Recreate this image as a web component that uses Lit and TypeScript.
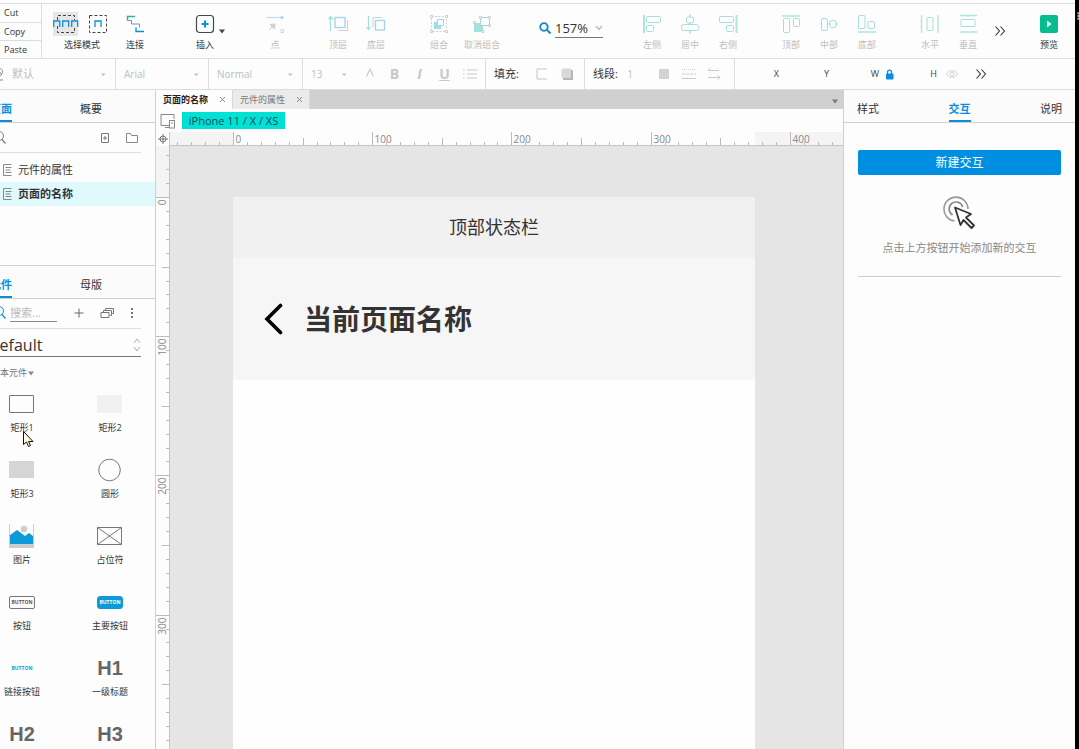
import { LitElement, html, svg, css } from "lit";
import { customElement, state } from "lit/decorators.js";

const TEAL = "#a5dfdc";
const SKY = "#a3d3ea";
const PALE = "#cfcfcf";
const BLUE = "#0a8edb";
const SCALE = 1.392;

const box = (w: number, h: number, body: unknown) =>
  html`<svg width=${w} height=${h} viewBox="0 0 ${w} ${h}" fill="none" aria-hidden="true">${body}</svg>`;

const icons: Record<string, unknown> = {
  selectA: box(26, 24, svg`<rect width="25" height="24" fill="#e6e6e6"/><path d="M4.500 8V3.500h17V8M4.500 14v6.500h17V14" stroke="#444" stroke-dasharray="3 2"/><path d="M.7 15V9h6v6M9.700 15V9h6v6M18.700 15V9h6v6" stroke="${BLUE}" stroke-width="1.300"/>`),
  selectB: box(26, 24, svg`<path d="M4.500 3.500h17v17h-17z" stroke="#444" stroke-dasharray="3 2"/><path d="M10 15V9h6v6" stroke="${BLUE}" stroke-width="1.300"/>`),
  connect: box(20, 20, svg`<path d="M10 2.500H2.500v4" stroke="#2bb3a0" stroke-width="1.400"/><path d="M2.500 6.500h4v3.500h8v3.500" stroke="#6f9aab"/><path d="M11 13.500v4h8" stroke="${BLUE}" stroke-width="1.300"/>`),
  insert: box(20, 20, svg`<rect x="1.500" y="1.500" width="17" height="17" rx="3" stroke="#3d4a52" stroke-width="1.200"/><path d="M10 6.500v7M6.500 10h7" stroke="${BLUE}" stroke-width="2"/>`),
  point: box(20, 20, svg`<path d="M1 3.500h15" stroke="#b9dff0" stroke-width="1.200"/><circle cx="17" cy="3.500" r="1.500" fill="${SKY}"/><path d="M4 16l5-5M5 10.500l5-.5-.5 5z" stroke="${PALE}" fill="${PALE}"/><rect x="16" y="15.500" width="2.500" height="3" stroke="#c6dbe4"/>`),
  front: box(20, 20, svg`<path d="M2.500 17V3M.5 5.500L2.500 2.500 5 5.500" stroke="${TEAL}" stroke-width="1.300"/><rect x="7" y="3.500" width="10" height="10" stroke="${SKY}" stroke-width="1.300"/><path d="M19.500 6v10.500H10" stroke="${PALE}"/>`),
  back: box(20, 20, svg`<path d="M2.500 2v13M.5 13l2 2.500 2-2.500" stroke="${TEAL}" stroke-width="1.200"/><path d="M7 13.500V3.500h9" stroke="${PALE}"/><rect x="9.500" y="6.500" width="9" height="9.500" stroke="${SKY}" stroke-width="1.300"/>`),
  group: box(20, 20, svg`<path d="M2.500 2.500h15v15h-15z" stroke="${PALE}" stroke-dasharray="2 1.500"/><g fill="#fff" stroke="${PALE}"><path d="M1.500 1.500h2v2h-2zM16.500 1.500h2v2h-2zM1.500 16.500h2v2h-2zM16.500 16.500h2v2h-2z"/></g><path d="M5 8h7v7H5z" fill="#9edfe0"/><path d="M8.500 5.500h6v6h-6z" fill="#fff" stroke="${SKY}"/>`),
  ungroup: box(20, 20, svg`<path d="M2 9h9v9H2z" fill="#a5e0df"/><path d="M8.500 3.500h9v8h-9z" fill="#fff" stroke="${SKY}"/><g fill="#fff" stroke="${PALE}"><path d="M7.500 2.500h2v2h-2zM16.500 2.500h2v2h-2zM16.500 10.500h2v2h-2zM1.500 7.500h2v2h-2zM10 16.500h2v2h-2z"/></g>`),
  left: box(20, 20, svg`<path d="M2 1v18" stroke="#aee8d3" stroke-width="2"/><rect x="4.500" y="2.500" width="14" height="6" rx="1" stroke="${TEAL}"/><rect x="4.500" y="11.500" width="7" height="6" rx="1" stroke="${TEAL}"/>`),
  center: box(20, 20, svg`<path d="M10 0v3M10 8v2M10 17v3" stroke="${TEAL}" stroke-width="1.300"/><rect x="6.500" y="3" width="7" height="6" rx="2" stroke="${TEAL}"/><rect x="1.500" y="10.500" width="17" height="6" rx="2" stroke="${TEAL}"/>`),
  right: box(20, 20, svg`<path d="M18.500 1v18" stroke="#aee8d3" stroke-width="2"/><rect x="1.500" y="2.500" width="14" height="6" rx="1" stroke="${TEAL}"/><rect x="8.500" y="11.500" width="7" height="6" rx="1" stroke="${TEAL}"/>`),
  top: box(20, 20, svg`<path d="M1 2h18" stroke="#aee8d3" stroke-width="1.500"/><rect x="2.500" y="4.500" width="6" height="14" rx="1" stroke="${TEAL}"/><rect x="12.500" y="4.500" width="6" height="8" rx="1" stroke="${TEAL}"/>`),
  middle: box(20, 20, svg`<path d="M1 10h2M9 10h2M17 10h2" stroke="${TEAL}"/><rect x="2.500" y="4.500" width="6" height="12" rx="1.500" stroke="${TEAL}"/><rect x="11" y="6.500" width="6" height="7" rx="1.500" stroke="${TEAL}"/>`),
  bottom: box(20, 20, svg`<path d="M1 18h18" stroke="#aee8d3" stroke-width="1.500"/><rect x="1.500" y="1.500" width="6.500" height="13" rx="1" stroke="${TEAL}"/><rect x="11" y="7.500" width="6.500" height="7" rx="1" stroke="${TEAL}"/>`),
  horizontal: box(20, 20, svg`<path d="M1.500 1v18M18 1v18" stroke="#aee8d3" stroke-width="1.300"/><rect x="7" y="3.500" width="6" height="13" rx="1" stroke="${TEAL}"/>`),
  vertical: box(20, 20, svg`<path d="M2 1.500h17M2 18h17" stroke="#aee8d3" stroke-width="1.500"/><rect x="3" y="5.500" width="14" height="7" rx="1" stroke="${TEAL}"/>`),
  preview: box(20, 20, svg`<rect x="1" y="1" width="18" height="18" rx="2" fill="#05bd90"/><path d="M8 6.500l4.500 3.500L8 13.500z" fill="#fff"/>`),
  more: box(12, 12, svg`<path d="M1.500 1.500l4 4.500-4 4.500M6.500 1.500l4 4.500-4 4.500" stroke="#333" stroke-width="1.100"/>`),
  caret: box(8, 5, svg`<path d="M1 .5h6L4 4.500z" fill="currentColor"/>`),
  tick: box(8, 5, svg`<path d="M2 1.500h4.500L4.200 4z" fill="currentColor"/>`),
  chevron: box(8, 6, svg`<path d="M1 1l3 3.500L7 1" stroke="#bbb" stroke-width="1.200"/>`),
  updown: box(8, 14, svg`<path d="M1 5l3-4 3 4M1 9l3 4 3-4" stroke="#aaa"/>`),
  zoom: box(12, 12, svg`<circle cx="5" cy="5" r="3.800" stroke="#1586c8" stroke-width="1.800"/><path d="M8 8l3.500 3.500" stroke="#1586c8" stroke-width="2"/>`),
  search: box(12, 14, svg`<circle cx="5" cy="5" r="4.500" stroke="currentColor"/><path d="M8 8.500l3.500 4" stroke="currentColor" stroke-width="1.200"/>`),
  brush: box(12, 14, svg`<path d="M3 2c6-2 9 1 7 5L7 10M4 5c3-1 5 0 5 2M3 13h8" stroke="#888"/>`),
  textColor: box(12, 14, svg`<path d="M2.500 9.500L6 2l3.500 7.500" stroke="#ccc" stroke-width="1.200"/>`),
  list: box(16, 12, svg`<path d="M1 2h1.500M1 6h1.500M1 10h1.500M5 2h10M5 6h10M5 10h10" stroke="#c8c8c8" stroke-width="1.200"/>`),
  fill: box(12, 12, svg`<path d="M11 1H1v10h10" stroke="#c5c5c5"/>`),
  shadow: box(12, 12, svg`<path d="M2 2h10v10H2z" fill="#b5b5b5"/><rect x=".5" y=".5" width="9.500" height="9.500" rx="1" fill="#d8d8d8"/>`),
  square: box(12, 12, svg`<path d="M1 1h10v10H1z" fill="#d2d2d2"/>`),
  dashes: box(14, 12, svg`<path d="M0 1.500h14" stroke="#ccc" stroke-dasharray="1 1"/><path d="M0 6h14" stroke="#ccc" stroke-dasharray="3 1"/><path d="M0 10.500h14" stroke="#ccc"/>`),
  arrows: box(14, 12, svg`<path d="M12 2.500H1l2.500-2M1 9.500h12l-2.500-2M13 9.500l-2.500 2" stroke="#c8c8c8"/>`),
  lock: box(9, 11, svg`<path d="M2.500 5V3.200a2 2 0 0 1 4 0V5" stroke="${BLUE}" stroke-width="1.300"/><rect x="1" y="4.500" width="7.500" height="6" rx="1" fill="${BLUE}"/>`),
  eye: box(12, 10, svg`<path d="M.5 5C3 .5 9 .5 11.500 5 9 9.500 3 9.500.5 5z" stroke="#d2d2d2"/><circle cx="6" cy="5" r="1.800" stroke="#d2d2d2"/>`),
  close: box(7, 7, svg`<path d="M1 1l5 5M6 1L1 6" stroke="#888"/>`),
  devices: box(16, 16, svg`<path d="M9 12.500H1V1.500h13V6M5 14.500h5" stroke="#888"/><rect x="9.500" y="7.500" width="5" height="7.500" stroke="#888"/><path d="M11 10h2" stroke="#888"/>`),
  target: box(10, 10, svg`<circle cx="5" cy="5" r="3" stroke="#777"/><path d="M5 0v10M0 5h10" stroke="#777"/>`),
  addPage: box(10, 12, svg`<path d="M1.500 1.500h7v9h-7z" stroke="#777"/><path d="M5 4v4M3 6h4" stroke="#777"/>`),
  folder: box(12, 10, svg`<path d="M.5 9.500v-9h4l1 2h6v7z" stroke="#888"/>`),
  page: box(10, 12, svg`<path d="M9.500.5h-8v11h8M3.500 3.500h6M3.500 6h5M3.500 8.500h6" stroke="#888"/>`),
  plus: box(10, 10, svg`<path d="M5 .5v9M.5 5h9" stroke="#666"/>`),
  stack: box(14, 12, svg`<path d="M1 5.500h8v5H1z" stroke="#777"/><path d="M3.500 5V3.500h8v5H10M5.500 3V1.500h8v5H12" stroke="#777"/>`),
  dots: box(4, 12, svg`<path d="M1 1h2v2H1zM1 5h2v2H1zM1 9h2v2H1z" fill="#777"/>`),
  tap: box(34, 34, svg`<path d="M11.500 25A12 12 0 1 1 25 13" stroke="#999" stroke-width="1.600"/><path d="M9.500 19A7 7 0 1 1 19.800 11" stroke="#888" stroke-width="1.600"/><path d="M12 11.500l16 6.500-5 3.500 8 8-2.500 2.500-8-8-3 5z" fill="#fff" stroke="#333" stroke-width="1.800" stroke-linejoin="round"/>`),
  back2: box(20, 34, svg`<path d="M17.500 3.500L4 17l13.500 13.500" stroke="#000" stroke-width="3.600" stroke-linecap="round"/>`),
  cursor: box(13, 18, svg`<path d="M1.500 1.500v13l3-2.500 2 4.500 2-1-2-4h4.500z" fill="#fffbe0" stroke="#111"/>`),
  rect1: box(26, 20, svg`<path d="M.5 1.500h24v17H.5z" stroke="#777"/>`),
  rect2: box(26, 20, svg`<path d="M0 1h25v18H0z" fill="#f1f1f1"/>`),
  rect3: box(26, 20, svg`<path d="M0 1h25v17H0z" fill="#d5d5d5"/>`),
  circle: box(26, 24, svg`<circle cx="12.500" cy="12" r="10.800" stroke="#777"/>`),
  image: box(26, 26, svg`<path d="M.5 1v24M24.500 1v24" stroke="#ccc"/><path d="M0 21h25v4H0z" fill="#cdcdcd"/><path d="M1 21v-9l7-5 8 6 4-3 4 3v8z" fill="#0c9ad8"/><circle cx="15" cy="6" r="3.200" fill="#ccc"/>`),
  placeholder: box(26, 20, svg`<path d="M.5 1.500h24v17H.5zM.5 1.500l24 17M24.500 1.500l-24 17" stroke="#777"/>`),
};

const alignTools = [
  [["left", "左侧"], ["center", "居中"], ["right", "右侧"]],
  [["top", "顶部"], ["middle", "中部"], ["bottom", "底部"]],
  [["horizontal", "水平"], ["vertical", "垂直"]],
];

const widgets: [unknown, string][] = [
  [icons.rect1, "矩形1"],
  [icons.rect2, "矩形2"],
  [icons.rect3, "矩形3"],
  [icons.circle, "圆形"],
  [icons.image, "图片"],
  [icons.placeholder, "占位符"],
  [html`<span class="chip">BUTTON</span>`, "按钮"],
  [html`<span class="chip solid">BUTTON</span>`, "主要按钮"],
  [html`<span class="chip link">BUTTON</span>`, "链接按钮"],
  [html`<span class="head">H1</span>`, "一级标题"],
  [html`<span class="head">H2</span>`, "二级标题"],
  [html`<span class="head">H3</span>`, "三级标题"],
];

@customElement("app-root")
export class AppRoot extends LitElement {
  @state() private page = "页面的名称";

  static styles = css`
    :host {
      display: flex;
      height: 100vh;
      overflow: hidden;
      background: #fdfdfd;
      color: #333;
      font-family: "Open Sans", "Noto Sans CJK SC", sans-serif;
      font-size: 11px;
      line-height: 16px;
    }
    * { box-sizing: border-box; }
    svg { display: block; flex: none; }
    button, select, input {
      font: inherit;
      color: inherit;
      background: none;
      border: 0;
      padding: 0;
      margin: 0;
      min-width: 0;
      border-radius: 0;
      outline: 0;
    }
    button { display: flex; align-items: center; justify-content: center; white-space: nowrap; }
    select { appearance: none; }
    .window { flex: 1; min-width: 0; display: flex; flex-direction: column; }
    .edge { flex: none; width: 4px; background: #000; padding-top: 12px; }
    .toolbar { display: flex; height: 59px; flex: none; border-bottom: 1px solid #dcdcdc; padding-top: 3px; }
    .tools { flex: 1; min-width: 0; display: flex; border-top: 1px solid #dcdcdc; }
    .clip { flex: none; width: 42px; display: grid; grid-template-rows: repeat(3, 1fr); border-top: 1px solid #dcdcdc; border-right: 1px solid #dcdcdc; font-size: 9px; line-height: 12px; }
    .clip button { justify-content: start; padding-left: 4px; }
    .clip button + button { border-top: 1px solid #dcdcdc; }
    .group { flex: none; display: flex; margin-left: 25px; }
    .group.near { margin-left: 2px; }
    .group.mid { margin-left: 32px; }
    .group.first { margin-left: 8px; }
    .group.wide { margin-left: 30px; }
    .tool { width: 38px; flex-direction: column; justify-content: start; gap: 4px; padding-top: 10px; font-size: 9px; line-height: 14px; }
    .tool.big { width: 48px; }
    .tool.off { color: #bdbdbd; }
    .modes { width: 64px; gap: 2px; padding-top: 8px; }
    .pair { display: flex; gap: 6px; }
    .drop { width: 8px; margin-left: -6px; color: #444; }
    .zoom { flex: none; display: flex; align-items: center; gap: 4px; margin-left: 33px; width: 64px; height: 33px; padding-top: 15px; }
    .pick { display: grid; align-items: center; flex: 1; min-width: 0; }
    .pick > * { grid-area: 1 / 1; }
    .pick > svg { justify-self: end; pointer-events: none; }
    .pick select { width: 100%; }
    .zoom .pick { border-bottom: 1px solid #777; font-size: 13px; height: 19px; }
    .more { margin-left: 7px; width: 12px; }
    .spacer { flex: 1; }
    .group.preview { margin: 0 7px 0 0; }

    .stylebar { display: flex; height: 31px; flex: none; border-bottom: 1px solid #dcdcdc; color: #bdbdbd; font-size: 10px; }
    .seg { flex: none; display: flex; align-items: center; border-right: 1px solid #dcdcdc; padding: 0 8px; white-space: nowrap; }
    .seg.theme { width: 116px; padding-left: 0; font-size: 11px; gap: 8px; }
    .seg.theme > svg { margin-left: -8px; }
    .seg.face { width: 93px; }
    .seg.weight { width: 94px; }
    .seg.text { width: 183px; }
    .seg.text .pick { flex: none; width: 37px; margin-right: 9px; }
    .seg.text button { font-size: 14px; font-weight: 700; color: #c8c8c8; }
    .seg.fill { width: 99px; color: #333; font-size: 11px; }
    .seg.line { width: 150px; font-size: 11px; }
    .seg.line label { color: #333; }
    .seg button { flex: none; width: 25px; height: 24px; }
    .seg .start { margin-left: 11px; }
    .seg .num { width: 20px; text-align: right; margin-right: 18px; font-size: 10px; }
    .geo { display: flex; align-items: center; flex: 1; min-width: 0; color: #444; font-size: 9px; }
    .geo label { flex: none; width: 50px; display: flex; justify-content: end; }
    .geo label:first-child { width: 44px; }
    .geo input { flex: 1; }
    .geo > svg { margin-left: 6px; }
    .geo label.last { width: 43px; }
    .geo button { flex: none; margin-left: 6px; width: 18px; }
    .geo button + button { margin-left: 11px; }

    .main { flex: 1; min-height: 0; display: grid; grid-template-columns: 156px minmax(0, 1fr) 232px; }
    .side { border-right: 1px solid #cfcfcf; overflow: hidden; min-height: 0; }
    .inner { height: 100%; margin-left: -44px; display: flex; flex-direction: column; }
    .tabs { display: flex; flex: none; height: 33px; border-bottom: 1px solid #cfcfcf; background: #fbfbfb; padding-right: 19px; }
    .tabs button { flex: 1; }
    .tabs span { height: 100%; padding-top: 7px; display: flex; align-items: center; border-bottom: 2px solid transparent; }
    .tabs .on span { color: #0a8edb; font-weight: 700; border-color: #0a8edb; }
    .find { display: flex; align-items: center; flex: none; height: 30px; margin: 0 14px 0 38px; border-bottom: 1px solid #dedede; color: #777; }
    .find input { flex: 1; }
    .find .gap { margin: 0 3px 0 16px; }
    .find.blue > svg { color: #0a8edb; }
    .find.blue input { flex: none; width: 47px; height: 18px; margin-left: 4px; border-bottom: 1px solid #888; }
    .find.blue { padding-bottom: 2px; }
    .find.blue button { flex: none; }
    .find.blue .plus { width: 43px; }
    .find.blue .more-options { margin-left: 16px; }
    input::placeholder { color: #bbb; opacity: 1; }
    .pages { flex: none; height: 113px; padding-top: 5px; border-bottom: 1px solid #cfcfcf; }
    .pages button { width: 100%; height: 24px; justify-content: start; gap: 6px; padding-left: 46px; }
    .pages .on { background: #dff9fc; font-weight: 700; }
    .library { flex: none; display: flex; height: 28px; margin: 0 14px 0 32px; padding-top: 4px; border-bottom: 1px solid #777; font-size: 16px; line-height: 24px; }
    .section { flex: none; padding: 8px 0 0 35px; font-size: 9px; color: #777; display: flex; align-items: center; }
    .section svg { color: #888; }
    .widgets { display: grid; grid-template-columns: 88px 88px; grid-auto-rows: 66px; padding: 7px 0 0 22px; flex: 1; min-height: 0; overflow: hidden; }
    .widget { display: grid; grid-template-rows: 32px 16px; justify-items: center; align-items: center; align-content: start; font-size: 9px; line-height: 14px; color: #333; }
    .widget i { font-style: normal; }
    .chip { display: block; width: 26px; border: 1px solid #777; border-radius: 2px; font: 700 5px/11px "Open Sans", sans-serif; text-align: center; color: #555; }
    .chip.solid { background: #0c9ad8; border-color: #0c9ad8; color: #fff; border-radius: 3px; }
    .chip.link { border-color: transparent; color: #0c9ad8; }
    .head { font: 700 20px/24px "Liberation Sans", sans-serif; color: #666; }
    .cursor { position: absolute; left: 22px; top: 430px; pointer-events: none; }

    .editor { min-width: 0; display: flex; flex-direction: column; }
    .files { flex: none; display: flex; height: 19px; background: #d0d0d0; }
    .files button { width: 77px; padding: 0 6px 0 7px; justify-content: space-between; font-size: 9px; line-height: 14px; background: #ebebeb; color: #777; border-right: 1px solid #d8d8d8; }
    .files .on { background: #fdfdfd; color: #222; font-weight: 700; }
    .files .menu { margin-left: auto; width: 16px; background: none; border: 0; color: #777; padding: 4px 0 0 4px; justify-content: start; }
    .device { flex: none; display: flex; align-items: center; gap: 6px; height: 23px; padding-left: 4px; }
    .device button { background: #00e1d5; width: 103px; height: 17px; font-size: 11px; color: #245; }
    .stage { flex: 1; min-height: 0; display: grid; grid-template: 14px minmax(0, 1fr) / 14px minmax(0, 1fr); }
    .corner { display: grid; place-items: center; border-right: 1px solid #ccc; }
    .ruler { background: #f4f4f4; overflow: hidden; }
    .ruler.h { border-bottom: 1px solid #c4c4c4; }
    .ruler.v { border-right: 1px solid #c4c4c4; }
    .ruler svg { width: 100%; height: 100%; }
    .ruler text { font-size: 10px; fill: #888; }
    .canvas { background: #e5e5e5; overflow: hidden; padding: 51px 0 0 63px; display: flex; }
    .phone { width: 522px; flex: none; background: #fefefe; color: #333; }
    .status { height: 61px; padding-bottom: 2px; background: #f1f1f1; font-size: 18px; display: grid; place-items: center; }
    .title { height: 122px; background: #f6f6f6; display: flex; align-items: center; gap: 21px; padding-left: 30px; }
    .title h1 { margin: 0; font-size: 28px; line-height: 40px; font-weight: 700; }

    .props { border-left: 1px solid #cfcfcf; display: flex; flex-direction: column; }
    .props .tabs { padding: 0 13px; justify-content: space-between; }
    .props .tabs button { flex: none; }
    .interact { margin: 27px 14px 0; padding-bottom: 20px; border-bottom: 1px solid #ccc; display: flex; flex-direction: column; align-items: center; }
    .interact button { width: 100%; height: 25px; border-radius: 2px; background: #008fe0; color: #fff; font-size: 12px; }
    .interact svg { margin-top: 21px; }
    .interact p { margin: 10px 0 0; color: #888; white-space: nowrap; }
  `;

  private tool(icon: string, label: string, extra = "off") {
    return html`<button class="tool ${extra}">${icons[icon]}<span>${label}</span></button>`;
  }

  private select(label: string, value: string, mark = "tick") {
    return html`<span class="pick"><select aria-label=${label}><option>${value}</option></select>${icons[mark]}</span>`;
  }

  private ruler(vertical: boolean) {
    const origin = vertical ? 51 : 63;
    const edge = 13;
    const marks = Array.from({ length: 62 }, (_, i) => (i - 5) * 10);
    return html`<svg aria-hidden="true">
      ${vertical
        ? svg`<rect x="0" y=${origin} width="13" height="1200" fill="#fdfdfd"/>`
        : svg`<rect x=${origin} y="0" width="522" height="14" fill="#fdfdfd"/>`}
      ${marks.map((m) => {
        const p = Math.round(origin + m * SCALE) + 0.5;
        const size = m % 100 === 0 ? edge : m % 50 === 0 ? 7 : 3;
        const d = vertical ? `M${edge} ${p}h${-size}` : `M${p} ${edge}v${-size}`;
        return svg`<path d=${d} stroke="#bbb"/>
          ${m % 100 === 0
            ? vertical
              ? svg`<text transform="translate(10 ${p + 2}) rotate(-90)" text-anchor="end">${m}</text>`
              : svg`<text x=${p + 2} y="11">${m}</text>`
            : ""}`;
      })}
    </svg>`;
  }

  private pageRow(name: string) {
    return html`<button class=${this.page === name ? "on" : ""} @click=${() => (this.page = name)}>${icons.page}${name}</button>`;
  }

  render() {
    return html`
      <div class="window">
        <header class="toolbar">
          <div class="clip"><button>Cut</button><button>Copy</button><button>Paste</button></div>
          <div class="tools">
            <div class="group first">
              <button class="tool modes"><span class="pair">${icons.selectA}${icons.selectB}</span><span>选择模式</span></button>
            </div>
            <div class="group near">${this.tool("connect", "连接", "")}</div>
            <div class="group mid">${this.tool("insert", "插入", "")}<button class="drop" aria-label="插入菜单">${icons.caret}</button></div>
            <div class="group wide">${this.tool("point", "点")}</div>
            <div class="group">${this.tool("front", "顶层")}${this.tool("back", "底层")}</div>
            <div class="group">${this.tool("group", "组合")}${this.tool("ungroup", "取消组合", "off big")}</div>
            <div class="zoom">${icons.zoom}${this.select("缩放", "157%", "chevron")}</div>
            <div class="group wide">${alignTools[0].map(([i, l]) => this.tool(i, l))}</div>
            <div class="group">${alignTools[1].map(([i, l]) => this.tool(i, l))}</div>
            <div class="group">${alignTools[2].map(([i, l]) => this.tool(i, l))}</div>
            <button class="more" aria-label="更多工具">${icons.more}</button>
            <div class="spacer"></div>
            <div class="group preview">${this.tool("preview", "预览", "")}</div>
          </div>
        </header>

        <div class="stylebar">
          <div class="seg theme">${icons.brush}${this.select("样式", "默认")}</div>
          <div class="seg face">${this.select("字体", "Arial")}</div>
          <div class="seg weight">${this.select("字重", "Normal")}</div>
          <div class="seg text">
            ${this.select("字号", "13")}
            <button aria-label="文字颜色">${icons.textColor}</button>
            <button>B</button><button><em>I</em></button><button><u>U</u></button>
            <button aria-label="列表">${icons.list}</button>
          </div>
          <div class="seg fill">填充:<button class="start" aria-label="填充颜色">${icons.fill}</button><button aria-label="阴影">${icons.shadow}</button></div>
          <div class="seg line">
            <label for="stroke">线段:</label><input id="stroke" class="num" value="1" />
            <button aria-label="线段颜色">${icons.square}</button><button aria-label="线型">${icons.dashes}</button><button aria-label="箭头">${icons.arrows}</button>
          </div>
          <div class="geo">
            <label><input />X</label><label><input />Y</label><label><input />W</label>${icons.lock}
            <label class="last"><input />H</label>
            <button aria-label="可见">${icons.eye}</button><button aria-label="更多">${icons.more}</button>
          </div>
        </div>

        <div class="main">
          <aside class="side">
            <div class="inner">
              <nav class="tabs"><button class="on"><span>页面</span></button><button><span>概要</span></button></nav>
              <div class="find">
                ${icons.search}<input aria-label="搜索页面" />
                <button aria-label="新建页面">${icons.addPage}</button>
                <button class="gap" aria-label="新建文件夹">${icons.folder}</button>
              </div>
              <div class="pages">${this.pageRow("元件的属性")}${this.pageRow("页面的名称")}</div>
              <nav class="tabs"><button class="on"><span>元件</span></button><button><span>母版</span></button></nav>
              <div class="find blue">
                ${icons.search}<input aria-label="搜索元件" placeholder="搜索..." />
                <button class="plus" aria-label="添加元件库">${icons.plus}</button>
                <button aria-label="元件库">${icons.stack}</button>
                <button class="more-options" aria-label="选项">${icons.dots}</button>
              </div>
              <div class="library">${this.select("元件库", "Default", "updown")}</div>
              <div class="section">基本元件${icons.caret}</div>
              <div class="widgets">
                ${widgets.map(([art, name]) => html`<button class="widget">${art}<i>${name}</i></button>`)}
              </div>
            </div>
          </aside>

          <section class="editor">
            <div class="files">
              <button class="on">页面的名称${icons.close}</button>
              <button>元件的属性${icons.close}</button>
              <button class="menu" aria-label="全部标签">${icons.caret}</button>
            </div>
            <div class="device">${icons.devices}<button>iPhone 11 / X / XS</button></div>
            <div class="stage">
              <div class="corner">${icons.target}</div>
              <div class="ruler h">${this.ruler(false)}</div>
              <div class="ruler v">${this.ruler(true)}</div>
              <div class="canvas">
                <article class="phone">
                  <div class="status">顶部状态栏</div>
                  <div class="title">${icons.back2}<h1>当前页面名称</h1></div>
                </article>
              </div>
            </div>
          </section>

          <aside class="props">
            <nav class="tabs"><button><span>样式</span></button><button class="on"><span>交互</span></button><button><span>说明</span></button></nav>
            <div class="interact">
              <button>新建交互</button>
              ${icons.tap}
              <p>点击上方按钮开始添加新的交互</p>
            </div>
          </aside>
        </div>
      </div>
      <div class="edge">${box(4, 8, svg`<path d="M2 1h2v6H2M2 4h2" stroke="#bfe0ea"/>`)}</div>
      <div class="cursor">${icons.cursor}</div>
    `;
  }
}
